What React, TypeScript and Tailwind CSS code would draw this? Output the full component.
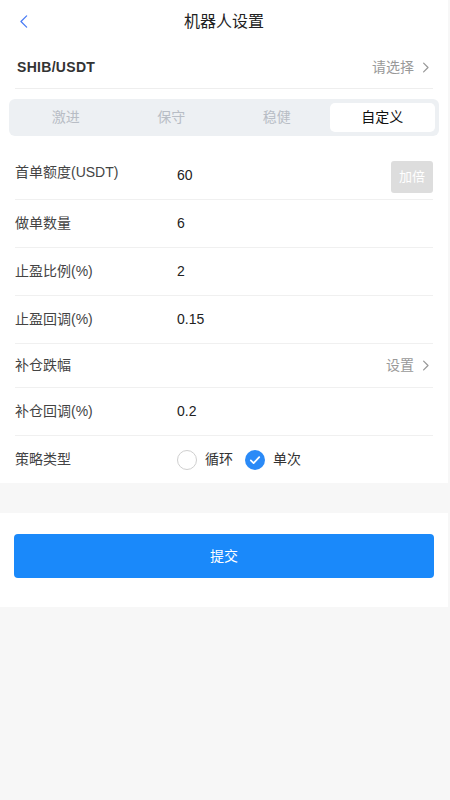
import { useState } from "react";

const font = { fontFamily: '"Liberation Sans", "Noto Sans CJK SC", sans-serif' };

const Chevron = ({ className }: { className?: string }) => (
  <svg viewBox="0 0 24 24" className={className} fill="none" stroke="currentColor" strokeWidth="2" strokeLinecap="round" strokeLinejoin="round">
    <path d="M9 5l7 7-7 7" />
  </svg>
);

const tabs = ["激进", "保守", "稳健", "自定义"];

const rows = [
  { label: "做单数量", value: "6" },
  { label: "止盈比例(%)", value: "2" },
  { label: "止盈回调(%)", value: "0.15" },
];

const Radio = ({ checked }: { checked: boolean }) =>
  checked ? (
    <span className="flex h-[20px] w-[20px] items-center justify-center rounded-full bg-[#2a8af7]">
      <svg viewBox="0 0 20 20" className="h-[14px] w-[14px]" fill="none" stroke="white" strokeWidth="2.5" strokeLinecap="round" strokeLinejoin="round">
        <path d="M4 10.5l4 4 8-8.5" />
      </svg>
    </span>
  ) : (
    <span className="h-[20px] w-[20px] rounded-full border border-[#cfcfcf]" />
  );

export default function App() {
  const [tab, setTab] = useState(3);
  const [mode, setMode] = useState("single");

  return (
    <div className="min-h-screen bg-[#f7f7f7]" style={font}>
      <div className="w-[448px] bg-white">
        {/* header */}
        <div className="relative flex h-[44px] items-center justify-center">
          <button className="absolute left-[16px] top-[13px] text-[#4a7cf5]">
            <svg viewBox="0 0 24 24" className="h-[17px] w-[17px]" fill="none" stroke="currentColor" strokeWidth="1.8" strokeLinecap="round" strokeLinejoin="round">
              <path d="M15 4l-8 8 8 8" />
            </svg>
          </button>
          <h1 className="text-[16px] text-[#222]">机器人设置</h1>
        </div>

        <div className="mx-[15px] flex h-[45px] items-center justify-between border-b border-[#eeeeee] pt-[2px]">
          <span className="pl-[2px] text-[14px] font-bold tracking-[0.3px] text-[#333]">SHIB/USDT</span>
          <span className="flex items-center text-[14px] text-[#999]">
            请选择
            <Chevron className="ml-[4px] h-[15px] w-[15px]" />
          </span>
        </div>

        {/* tabs */}
        <div className="mx-[9px] mt-[10px] grid h-[37px] grid-cols-4 rounded-[6px] bg-[#edf0f3] p-[4px]">
          {tabs.map((t, i) => (
            <button
              key={t}
              onClick={() => setTab(i)}
              className={
                i === tab
                  ? "rounded-[5px] bg-white text-[14px] text-[#111]"
                  : "text-[14px] text-[#b8bdc5]"
              }
            >
              {t}
            </button>
          ))}
        </div>

        {/* form rows */}
        <div className="mx-[15px] mt-[15px]">
          <div className="flex h-[49px] border-b border-[#f0f0f0]">
            <span className="w-[162px] pt-[11px] text-[14px] text-[#444]">首单额度(USDT)</span>
            <span className="flex-1 pt-[14px] text-[14px] text-[#222]">60</span>
            <button className="mt-[10px] h-[32px] w-[42px] rounded-[3px] bg-[#dddddd] text-[13px] text-white">加倍</button>
          </div>
          {rows.map((r) => (
            <div key={r.label} className="flex h-[48px] items-center border-b border-[#f0f0f0]">
              <span className="w-[162px] text-[14px] text-[#444]">{r.label}</span>
              <span className="text-[14px] text-[#222]">{r.value}</span>
            </div>
          ))}
          <div className="flex h-[44px] items-center justify-between border-b border-[#f0f0f0]">
            <span className="text-[14px] text-[#444]">补仓跌幅</span>
            <span className="flex items-center text-[14px] text-[#999]">
              设置
              <Chevron className="ml-[4px] h-[15px] w-[15px]" />
            </span>
          </div>
          <div className="flex h-[48px] items-center border-b border-[#f0f0f0]">
            <span className="w-[162px] text-[14px] text-[#444]">补仓回调(%)</span>
            <span className="text-[14px] text-[#222]">0.2</span>
          </div>
          <div className="flex h-[47px] items-center">
            <span className="w-[162px] text-[14px] text-[#444]">策略类型</span>
            <button className="flex items-center" onClick={() => setMode("loop")}>
              <Radio checked={mode === "loop"} />
              <span className="ml-[8px] text-[14px] text-[#333]">循环</span>
            </button>
            <button className="ml-[12px] flex items-center" onClick={() => setMode("single")}>
              <Radio checked={mode === "single"} />
              <span className="ml-[8px] text-[14px] text-[#333]">单次</span>
            </button>
          </div>
        </div>
      </div>

      <div className="h-[30px]" />

      <div className="w-[448px] bg-white px-[14px] pb-[29px] pt-[21px]">
        <button className="h-[44px] w-full rounded-[4px] bg-[#1a89fa] text-[14px] text-white">提交</button>
      </div>
    </div>
  );
}
